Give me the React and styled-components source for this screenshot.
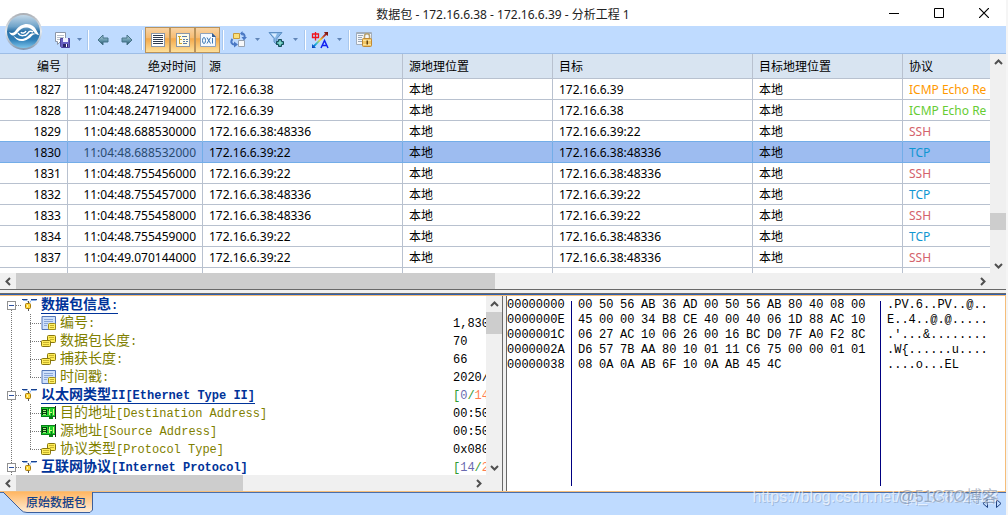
import styled, { createGlobalStyle } from "styled-components";

const GlobalStyle = createGlobalStyle`
  * {
    box-sizing: border-box;
  }
  body {
    margin: 0;
    background: #f5f5f5;
    font-family: "Noto Sans", "Noto Sans CJK SC", sans-serif;
    font-size: 12px;
    color: #000;
  }
  button {
    border: 0;
    padding: 0;
    background: none;
    font: inherit;
    color: inherit;
  }
  svg {
    display: block;
  }
`;

const Window = styled.div`
  position: relative;
  height: 100vh;
  margin-right: 2px;
  display: flex;
  flex-direction: column;
  overflow: hidden;
  background: #fff;
`;

const TitleBar = styled.header`
  height: 26px;
  flex: none;
  display: grid;
  grid-template-columns: 135px 1fr 135px;
  align-items: center;
`;
const Title = styled.h1`
  margin: 0;
  grid-column: 2;
  padding-top: 4px;
  text-align: center;
  font-size: 12px;
  font-weight: 400;
  line-height: 22px;
  white-space: nowrap;
  color: #222;
`;
const WindowButtons = styled.div`
  display: flex;
`;
const WindowButton = styled.button`
  width: 45px;
  height: 24px;
  display: flex;
  align-items: center;
  justify-content: center;
`;
const Logo = styled.div`
  position: absolute;
  top: 12px;
  left: 4px;
`;

const Toolbar = styled.div`
  height: 28px;
  flex: none;
  display: flex;
  align-items: center;
  padding-left: 50px;
  background: #bfdbff;
  border-bottom: 1px solid #9dbde6;
`;
const Tool = styled.button`
  width: ${(p) => (p.$active ? 25 : 24)}px;
  height: 26px;
  display: flex;
  align-items: center;
  justify-content: center;
  border: ${(p) => (p.$active ? "1px solid #b9935c" : "0")};
  background: ${(p) =>
    p.$active
      ? "linear-gradient(#f8d3a4, #f7bc72 40%, #f4a94b 45%, #fee09a)"
      : "none"};
`;
const Drop = styled.button`
  width: ${(p) => (p.$wide ? 14 : 11)}px;
  height: 26px;
  display: flex;
  align-items: center;
  justify-content: center;
`;
const Separator = styled.span`
  width: 2px;
  height: 20px;
  margin: 0 2px;
  background: #fff;
  border-left: 1px solid #a9c8ee;
`;

const PacketPane = styled.section`
  flex: 235 1 0;
  min-height: 0;
  display: flex;
  flex-direction: column;
`;
const PacketBody = styled.div`
  flex: 1;
  min-height: 0;
  display: flex;
`;
const TableClip = styled.div`
  flex: 1;
  min-width: 0;
  overflow: hidden;
`;
const PacketTable = styled.table`
  width: 100%;
  table-layout: fixed;
  border-collapse: separate;
  border-spacing: 0;
`;
const HeadCell = styled.th`
  height: 25px;
  padding: 2px 6px 0;
  overflow: hidden;
  text-align: ${(p) => (p.$right ? "right" : "left")};
  font-weight: 400;
  line-height: 18px;
  white-space: nowrap;
  background: #d8e4f1;
  border: solid #b8c1cf;
  border-width: 0 1px 1px 0;
  &:last-child {
    border-right: 0;
  }
`;
const Row = styled.tr`
  background: ${(p) => (p.$selected ? "#9dbcf0" : "#fff")};
  --line: ${(p) => (p.$selected ? "#73ade8" : "#b8c1cf")};
  --under: ${(p) => (p.$selected || p.$beforeSelected ? "#73ade8" : "#b8c1cf")};
`;
const Cell = styled.td`
  height: 21px;
  padding: 2px 6px 0;
  overflow: hidden;
  text-align: ${(p) => (p.$right ? "right" : "left")};
  line-height: 18px;
  white-space: nowrap;
  color: ${(p) => p.$color || "#000"};
  border: solid;
  border-width: 0 1px 1px 0;
  border-color: var(--line);
  border-bottom-color: var(--under);
  &:last-child {
    border-right: 0;
  }
`;

const VBar = styled.div`
  width: 16px;
  flex: none;
  display: flex;
  flex-direction: column;
  background: #f0f0f0;
`;
const HBar = styled.div`
  height: 16px;
  flex: none;
  display: flex;
  padding-right: 16px;
  background: #f0f0f0;
`;
const BarButton = styled.button`
  width: 16px;
  height: 16px;
  flex: none;
  display: flex;
  align-items: center;
  justify-content: center;
`;
const Track = styled.div`
  flex: 1;
  display: flex;
  flex-direction: inherit;
`;
const Thumb = styled.div`
  flex: ${(p) => p.$size} 1 0;
  background: #cdcdcd;
`;
const Gap = styled.div`
  flex: ${(p) => p.$size} 1 0;
`;

const Splitter = styled.div`
  height: 7px;
  flex: none;
  background: #f0f0f0;
  border-top: 1px solid #696969;
  border-bottom: 1px solid #f5bd79;
  box-shadow: inset 0 -1px #2f5fae, inset 0 -2px #696969;
`;

const DetailPane = styled.section`
  flex: 195 1 0;
  min-height: 0;
  display: flex;
`;
const TreePane = styled.div`
  flex: 0 0 calc(50% - 1px);
  min-width: 0;
  display: flex;
  flex-direction: column;
`;
const TreeBody = styled.div`
  flex: 1;
  min-height: 0;
  display: flex;
`;
const TreeSplitter = styled.div`
  width: 5px;
  flex: none;
  background: #f0f0f0;
  border: solid #696969;
  border-width: 0 1px;
`;

const dotsDown = "repeating-linear-gradient(#777 0 1px, transparent 1px 2px)";
const dotsAcross =
  "repeating-linear-gradient(90deg, #777 0 1px, transparent 1px 2px)";

const Tree = styled.ul`
  flex: 1;
  min-width: 0;
  margin: 0;
  padding: 0;
  overflow: hidden;
  list-style: none;
  font-family: "Liberation Mono", "Noto Sans CJK SC", monospace;
  background: ${dotsDown} 11px 10px / 1px 100% no-repeat;
`;
const Branch = styled.ul`
  margin: 0 0 0 30px;
  padding: 0;
  list-style: none;
  background: ${dotsDown} 0 0 / 1px calc(100% - 8px) no-repeat;
`;
const Node = styled.div`
  height: 18px;
  display: grid;
  grid-template-columns: 1fr 33px;
  padding-left: ${(p) => (p.$root ? 7 : 0)}px;
`;
const NodeName = styled.div`
  display: flex;
  align-items: center;
  color: ${(p) => (p.$root ? "#003399" : "#808000")};
  white-space: nowrap;
`;
const NodeValue = styled.div`
  overflow: hidden;
  padding-top: 2px;
  line-height: 16px;
  white-space: nowrap;
  color: ${(p) => p.$color || "#000"};
`;
const Toggle = styled.button`
  width: 9px;
  height: 9px;
  display: flex;
  align-items: center;
  justify-content: center;
  background: #fff;
  border: 1px solid #919191;
`;
const Dots = styled.span`
  width: ${(p) => p.$width}px;
  height: 1px;
  background: ${dotsAcross};
`;
const Label = styled.span`
  margin-left: ${(p) => (p.$root ? 4 : 3)}px;
  height: 17px;
  line-height: 17px;
  font-weight: ${(p) => (p.$root ? 700 : 400)};
  border-bottom: ${(p) => (p.$root ? "1px solid #003399" : "0")};
`;
const Han = styled.span`
  font-size: 14px;
`;
const Tint = styled.span`
  color: ${(p) => p.$color};
`;

const HexPane = styled.div`
  flex: 1;
  min-width: 0;
  display: flex;
  overflow: hidden;
  border-right: 1px solid #f5bd79;
  font-family: "Liberation Mono", monospace;
  line-height: 15px;
`;
const Offsets = styled.div`
  width: 64px;
  flex: none;
  padding-top: 2px;
`;
const Divider = styled.span`
  width: 1px;
  flex: none;
  margin: 5px 0;
  background: #000080;
`;
const Bytes = styled.div`
  flex: none;
  display: grid;
  grid-template-columns: repeat(14, 21px);
  grid-auto-rows: 15px;
  padding: 2px 8px 0 6px;
`;
const Ascii = styled.div`
  padding: 2px 0 0 6px;
  white-space: pre;
`;

const TabStrip = styled.nav`
  position: relative;
  height: 24px;
  flex: none;
  display: flex;
  justify-content: space-between;
  background: #bfdbff;
  border-top: 1px solid #f5bd79;
  box-shadow: inset 0 1px #4a6ea9;
`;
const Tab = styled.button`
  position: relative;
  width: 94px;
  height: 22px;
  padding-left: 18px;
  color: #15428b;
  font-weight: 500;
  line-height: 20px;
`;
const TabShape = styled.svg`
  position: absolute;
  top: 0;
  left: 0;
`;
const TabText = styled.span`
  position: relative;
`;
const TabArrows = styled.div`
  display: flex;
  gap: 8px;
  padding: 0 4px;
`;
const Watermark = styled.div`
  position: absolute;
  right: ${(p) => p.$right}px;
  bottom: 8px;
  font-family: "Liberation Sans", "Noto Sans CJK SC", sans-serif;
  font-size: 16px;
  line-height: 20px;
  white-space: nowrap;
  color: ${(p) => p.$color};
  text-shadow: ${(p) => p.$shadow};
  pointer-events: none;
`;

const ORANGE = "#ff9900";
const GREEN = "#66cc33";
const RED = "#d4636b";
const BLUE = "#0f96d2";

const A = "172.16.6.38";
const B = "172.16.6.39";
const packets = [
  ["1827", "11:04:48.247192000", A, B, "ICMP Echo Re", ORANGE],
  ["1828", "11:04:48.247194000", B, A, "ICMP Echo Re", GREEN],
  ["1829", "11:04:48.688530000", A + ":48336", B + ":22", "SSH", RED],
  ["1830", "11:04:48.688532000", B + ":22", A + ":48336", "TCP", BLUE],
  ["1831", "11:04:48.755456000", B + ":22", A + ":48336", "SSH", RED],
  ["1832", "11:04:48.755457000", A + ":48336", B + ":22", "TCP", BLUE],
  ["1833", "11:04:48.755458000", A + ":48336", B + ":22", "SSH", RED],
  ["1834", "11:04:48.755459000", B + ":22", A + ":48336", "TCP", BLUE],
  ["1837", "11:04:49.070144000", B + ":22", A + ":48336", "SSH", RED],
];
const SELECTED = 3;

const tree = [
  {
    han: "数据包信息",
    latin: ":",
    children: [
      { icon: "note", han: "编号", latin: ":", value: "1,830" },
      { icon: "size", han: "数据包长度", latin: ":", value: "70" },
      { icon: "size", han: "捕获长度", latin: ":", value: "66" },
      { icon: "note", han: "时间戳", latin: ":", value: "2020/" },
    ],
  },
  {
    han: "以太网类型",
    latin: "II[Ethernet Type II]",
    range: ["0", "14"],
    children: [
      { icon: "card", han: "目的地址", latin: "[Destination Address]", value: "00:50" },
      { icon: "card", han: "源地址", latin: "[Source Address]", value: "00:50" },
      { icon: "size", han: "协议类型", latin: "[Protocol Type]", value: "0x080" },
    ],
  },
  {
    han: "互联网协议",
    latin: "[Internet Protocol]",
    range: ["14", "20"],
    children: [],
  },
];

const hexRows = [
  ["00000000", "00 50 56 AB 36 AD 00 50 56 AB 80 40 08 00", ".PV.6..PV..@.."],
  ["0000000E", "45 00 00 34 B8 CE 40 00 40 06 1D 88 AC 10", "E..4..@.@....."],
  ["0000001C", "06 27 AC 10 06 26 00 16 BC D0 7F A0 F2 8C", ".'...&........"],
  ["0000002A", "D6 57 7B AA 80 10 01 11 C6 75 00 00 01 01", ".W{......u...."],
  ["00000038", "08 0A 0A AB 6F 10 0A AB 45 4C", "....o...EL"],
];

const LogoIcon = () => (
  <svg width="40" height="40" viewBox="0 0 40 40">
    <defs>
      <linearGradient id="ball" x2="0" y2="1">
        <stop offset="0" stopColor="#c3d8e8" />
        <stop offset="0.35" stopColor="#6fa3c9" />
        <stop offset="0.5" stopColor="#2b72a8" />
        <stop offset="0.75" stopColor="#2f7fb8" />
        <stop offset="1" stopColor="#7cc4ea" />
      </linearGradient>
      <linearGradient id="rim" x2="0" y2="1">
        <stop offset="0" stopColor="#a9adb3" />
        <stop offset="0.5" stopColor="#e6ebf0" />
        <stop offset="1" stopColor="#8095ad" />
      </linearGradient>
    </defs>
    <circle cx="19.500" cy="19.500" r="18.500" fill="url(#rim)" />
    <circle cx="19.500" cy="19.500" r="16.500" fill="url(#ball)" />
    <path
      d="M5 20C8 22 10 21 12 18C16 12 24 10 29 14C32 16 33 20 35 23C31 23 30 19 27 17C22 14 17 16 14 20C11 24 7 25 5 20Z"
      fill="#fff"
    />
    <path
      d="M9 23C13 28 19 28 23 25C26 22 28 20 32 22C28 22 28 25 24 27C18 31 12 29 9 23Z"
      fill="#fff"
    />
    <path
      d="M14 21C16 25 22 24 24 21C25 19 27 19 29 20M17 20C18 22 21 21 22 19"
      fill="none"
      stroke="#fff"
      strokeWidth="1.500"
    />
  </svg>
);

const SaveIcon = () => (
  <svg width="17" height="17" viewBox="0 0 17 17">
    <path d="M1.500 1.500H11.500V10.500H6.500L3.500 13.500V10.500H1.500Z" fill="#fff" stroke="#8b96a8" />
    <path d="M3 4.500H10M3 6.500H10M3 8.500H7" stroke="#b7c0cc" />
    <path d="M6.500 7.500H15.500V16.500H7.500L6.500 15.500Z" fill="#6861c2" stroke="#4a439c" />
    <path d="M9 7H14V11H9Z" fill="#f1f1ff" />
    <path d="M9 13H14V16H9Z" fill="#2b2668" />
    <path d="M12 13H13V16H12Z" fill="#fff" />
  </svg>
);

const MoveIcon = ({ right }) => (
  <svg width="12" height="12" viewBox="0 0 12 12">
    <defs>
      <linearGradient id={right ? "mr" : "ml"} x2="0" y2="1">
        <stop offset="0" stopColor="#b9d5e0" />
        <stop offset="0.6" stopColor="#5b8fa5" />
        <stop offset="1" stopColor="#173e50" />
      </linearGradient>
    </defs>
    <path
      d={right ? "M11 6L6 1V4H1V8H6V11Z" : "M1 6L6 1V4H11V8H6V11Z"}
      fill={right ? "url(#mr)" : "url(#ml)"}
      stroke="#47748a"
      strokeWidth="1"
    />
  </svg>
);

const ListIcon = () => (
  <svg width="16" height="16" viewBox="0 0 16 16" shapeRendering="crispEdges">
    <path d="M1 1H15V15H1Z" fill="#8a97aa" />
    <path d="M2 2H14V14H2Z" fill="#fff" />
    <path d="M3 3.500H13M3 5.500H13M3 7.500H13M3 9.500H13M3 11.500H13" stroke="#2f3b50" />
  </svg>
);

const DetailIcon = () => (
  <svg width="16" height="16" viewBox="0 0 16 16" shapeRendering="crispEdges">
    <path d="M1 1H15V15H1Z" fill="#8a97aa" />
    <path d="M2 2H14V14H2Z" fill="#fffbe6" />
    <path d="M3 4.500H6M4.500 5V12M5 7.500H7M5 11.500H7" stroke="#d0a52a" />
    <path d="M7 4.500H12M8 7.500H10M11 7.500H13M8 9.500H10M11 9.500H13M8 11.500H12" stroke="#5a7bab" />
  </svg>
);

const HexIcon = () => (
  <svg width="16" height="16" viewBox="0 0 16 16">
    <path d="M0.500 1.500H12.500L15.500 4.500V14.500H0.500Z" fill="#f4f9ff" stroke="#8fa3bd" />
    <path d="M12 1V5H16Z" fill="#355d91" />
    <ellipse cx="4" cy="8.500" rx="1.500" ry="3" fill="none" stroke="#3b78b5" />
    <path d="M7 5.500L10.500 11.500M10.500 5.500L7 11.500M12.500 6V11.500" stroke="#3b78b5" />
  </svg>
);

const SwapIcon = () => (
  <svg width="17" height="17" viewBox="0 0 17 17">
    <path d="M3.500 2.500H9.500V7.500H3.500Z" fill="#fbe07a" stroke="#c79a3c" />
    <path d="M8.500 9.500H14.500V15.500H8.500Z" fill="#f7f8fa" stroke="#97a2b0" />
    <path d="M2.500 8C0 11 2 14 5 13.500" fill="none" stroke="#4a78c4" strokeWidth="2" />
    <path d="M4 10.500L8 13.500L4 16.500Z" fill="#4a78c4" />
    <path d="M11.500 2.500C14 2.500 15 4 14.500 6.500" fill="none" stroke="#4a78c4" strokeWidth="2" />
    <path d="M11.500 6H17L14 9.500Z" fill="#4a78c4" />
    <path d="M12.500 0V5L10 2.500Z" fill="#4a78c4" />
  </svg>
);

const FilterIcon = () => (
  <svg width="17" height="17" viewBox="0 0 17 17">
    <path d="M1 1.500H14L9 7.500V14L6 11V7.500Z" fill="#85b5e5" stroke="#5d8fc4" />
    <path d="M3 2.500H9L7 7Z" fill="#d8ecff" />
    <path d="M10.500 8.500H13.500V10.500H15.500V13.500H13.500V15.500H10.500V13.500H8.500V10.500H10.500Z" fill="#3fa39f" stroke="#164c58" />
    <path d="M12 10V14M10 12H14" stroke="#a4e8dc" />
  </svg>
);

const TranslateIcon = () => (
  <svg width="18" height="18" viewBox="0 0 18 18">
    <defs>
      <linearGradient id="ray" x1="0" y1="1" x2="1" y2="0">
        <stop offset="0" stopColor="#0a2ab8" />
        <stop offset="0.25" stopColor="#18b4e0" />
        <stop offset="0.5" stopColor="#f2dc30" />
        <stop offset="0.75" stopColor="#c0392b" />
        <stop offset="1" stopColor="#5c0c0c" />
      </linearGradient>
    </defs>
    <path
      d="M1 17V13L2.500 14.200L14 2.700L13 1H17V5L15.300 4L3.800 15.500L5 17Z"
      fill="url(#ray)"
    />
    <path d="M1.500 3V6.500H7.500V3ZM4.500 1V9.500" fill="none" stroke="#f0141e" strokeWidth="1.300" />
    <path d="M10 17L13.500 9.500L17 17M11.500 14.500H15.500" fill="none" stroke="#1020f0" strokeWidth="1.500" />
  </svg>
);

const LockIcon = () => (
  <svg width="17" height="17" viewBox="0 0 17 17">
    <path d="M0.500 1.500H15.500V13.500H0.500Z" fill="#f5f7fa" stroke="#a3aebb" />
    <path d="M1 2.500H15" stroke="#9fb0c2" />
    <path d="M2 4.500H7M2 6.500H6M2 8.500H6M2 10.500H6" stroke="#9aa7b6" />
    <path d="M8.500 8V5C8.500 2 13.500 2 13.500 5V8" fill="none" stroke="#b5a070" strokeWidth="1.500" />
    <rect x="6.500" y="7.500" width="9" height="8" rx="1" fill="#f2c868" stroke="#c08a35" />
    <path d="M7 9.500H15M7 13.500H15" stroke="#fae3a0" />
    <path d="M10.500 9.500H12V13.500H10.500Z" fill="#62430f" />
  </svg>
);

const DropIcon = () => (
  <svg width="5" height="3" viewBox="0 0 5 3">
    <path d="M0 0H5L2.500 3Z" fill="#6085b8" />
  </svg>
);

const turns = { up: 0, right: 90, down: 180, left: 270 };
const Chevron = ({ to }) => (
  <svg width="9" height="9" viewBox="0 0 9 9">
    <path
      d="M1 6L4.500 2.500L8 6"
      fill="none"
      stroke="#505050"
      strokeWidth="2"
      transform={`rotate(${turns[to]} 4.5 4.5)`}
    />
  </svg>
);

const RootIcon = () => (
  <svg width="15" height="14" viewBox="0 0 15 14">
    <path d="M0 1.500H5.500M9 1.500H15" stroke="#17418f" />
    <path d="M1 2.500H5L6.500 4.500M14.500 2.500H9L7.500 5" fill="none" stroke="#8fb2e6" />
    <path d="M6.500 3V6" stroke="#555" />
    <rect x="3.500" y="5.500" width="5" height="5" rx="1" fill="#ffd83d" stroke="#a77a0a" />
    <path d="M5 7H6V9H5Z" fill="#fff6b8" />
    <path d="M6.500 11V13" stroke="#555" />
  </svg>
);

const nodeIcons = {
  note: (
    <svg width="16" height="16" viewBox="0 0 16 16">
      <path d="M1 1.500H14.500V14.500H1Z" fill="#cfe0fb" stroke="#5275b8" />
      <path d="M3 4.500H12M3 6.500H12M3 8.500H7M3 10.500H6" stroke="#8aa6d8" />
      <rect x="7.500" y="8.500" width="7" height="6" rx="1" fill="#fff16a" stroke="#a08c13" />
      <path d="M9 10.500H13M9 12.500H13" stroke="#c4ad25" />
    </svg>
  ),
  size: (
    <svg width="16" height="16" viewBox="0 0 16 16">
      <rect x="6.500" y="2.500" width="8" height="7" rx="1" fill="#ffec58" stroke="#88770f" />
      <rect x="0.500" y="7.500" width="9" height="6" rx="1" fill="#ffec58" stroke="#88770f" />
      <path d="M8 4.500H13M9 6.500H13M2 9.500H8M2 11.500H8" stroke="#c9b32c" />
    </svg>
  ),
  card: (
    <svg width="16" height="16" viewBox="0 0 16 16" shapeRendering="crispEdges">
      <path d="M0 2H14V12H12V14H8V12H0Z" fill="#087f16" />
      <path d="M1 3H14V11H1Z" fill="#1fd02f" />
      <path d="M1 4H6V10H1Z" fill="#063e0d" />
      <path d="M2 5.500H5M2 7.500H5M2 9.500H5" stroke="#9df07a" />
      <path d="M8 4V10M12 4V10M9 7.500H11" stroke="#d9ff82" />
      <path d="M7 3V6M10 8V11" stroke="#087f16" />
      <path d="M14.500 1V14" stroke="#222" />
    </svg>
  ),
};

const VScroll = ({ before, size, after }) => (
  <VBar>
    <BarButton aria-label="Scroll up">
      <Chevron to="up" />
    </BarButton>
    <Track>
      <Gap $size={before} />
      <Thumb $size={size} />
      <Gap $size={after} />
    </Track>
    <BarButton aria-label="Scroll down">
      <Chevron to="down" />
    </BarButton>
  </VBar>
);

const HScroll = () => (
  <HBar>
    <BarButton aria-label="Scroll left">
      <Chevron to="left" />
    </BarButton>
    <Track>
      <Thumb $size={1} />
      <Gap $size={1} />
    </Track>
    <BarButton aria-label="Scroll right">
      <Chevron to="right" />
    </BarButton>
  </HBar>
);

const TreeNode = ({ node }) => (
  <li>
    <Node $root>
      <NodeName $root>
        <Toggle aria-label="Collapse">
          <svg width="5" height="1">
            <path d="M0 0.500H5" stroke="#2b50a0" />
          </svg>
        </Toggle>
        <Dots $width={6} />
        <RootIcon />
        <Label $root>
          <Han>{node.han}</Han>
          {node.latin}
        </Label>
      </NodeName>
      {node.range && (
        <NodeValue $color="#2f9a2f">
          [<Tint $color="#6a6ab0">{node.range[0]}</Tint>/
          <Tint $color="#ff7f50">{node.range[1]}</Tint>
        </NodeValue>
      )}
    </Node>
    <Branch>
      {node.children.map((child) => (
        <li key={child.han}>
          <Node>
            <NodeName>
              <Dots $width={11} />
              {nodeIcons[child.icon]}
              <Label>
                <Han>{child.han}</Han>
                {child.latin}
              </Label>
            </NodeName>
            <NodeValue>{child.value}</NodeValue>
          </Node>
        </li>
      ))}
    </Branch>
  </li>
);

const App = () => {
  return (
    <Window>
      <GlobalStyle />
      <TitleBar>
        <Title>数据包 - 172.16.6.38 - 172.16.6.39 - 分析工程 1</Title>
        <WindowButtons>
          <WindowButton aria-label="Minimize">
            <svg width="10" height="10">
              <path d="M0 5.500H10" stroke="#000" />
            </svg>
          </WindowButton>
          <WindowButton aria-label="Maximize">
            <svg width="10" height="10">
              <path d="M0.500 0.500H9.500V9.500H0.500Z" fill="none" stroke="#000" />
            </svg>
          </WindowButton>
          <WindowButton aria-label="Close">
            <svg width="10" height="10">
              <path d="M0 0L10 10M10 0L0 10" stroke="#000" strokeWidth="1.200" />
            </svg>
          </WindowButton>
        </WindowButtons>
      </TitleBar>

      <Toolbar>
        <Tool aria-label="Save">
          <SaveIcon />
        </Tool>
        <Drop aria-label="Save options">
          <DropIcon />
        </Drop>
        <Separator />
        <Tool aria-label="Previous">
          <MoveIcon />
        </Tool>
        <Tool aria-label="Next">
          <MoveIcon right />
        </Tool>
        <Separator />
        <Tool $active aria-label="Packet list">
          <ListIcon />
        </Tool>
        <Tool $active aria-label="Decode">
          <DetailIcon />
        </Tool>
        <Tool $active aria-label="Hex">
          <HexIcon />
        </Tool>
        <Separator />
        <Tool aria-label="Layout">
          <SwapIcon />
        </Tool>
        <Drop $wide aria-label="Layout options">
          <DropIcon />
        </Drop>
        <Tool aria-label="Filter">
          <FilterIcon />
        </Tool>
        <Drop $wide aria-label="Filter options">
          <DropIcon />
        </Drop>
        <Separator />
        <Tool aria-label="Encoding">
          <TranslateIcon />
        </Tool>
        <Drop $wide aria-label="Encoding options">
          <DropIcon />
        </Drop>
        <Separator />
        <Tool aria-label="Lock">
          <LockIcon />
        </Tool>
      </Toolbar>

      <PacketPane>
        <PacketBody>
          <TableClip>
            <PacketTable>
              <colgroup>
                <col width="68" />
                <col width="135" />
                <col width="200" />
                <col width="150" />
                <col width="200" />
                <col width="150" />
                <col />
              </colgroup>
              <thead>
                <tr>
                  <HeadCell $right>编号</HeadCell>
                  <HeadCell $right>绝对时间</HeadCell>
                  <HeadCell>源</HeadCell>
                  <HeadCell>源地理位置</HeadCell>
                  <HeadCell>目标</HeadCell>
                  <HeadCell>目标地理位置</HeadCell>
                  <HeadCell>协议</HeadCell>
                </tr>
              </thead>
              <tbody>
                {packets.map(([id, time, from, to, protocol, color], i) => (
                  <Row
                    key={id}
                    $selected={i === SELECTED}
                    $beforeSelected={i + 1 === SELECTED}
                  >
                    <Cell $right>{id}</Cell>
                    <Cell $right $color={i === SELECTED && "#294b70"}>
                      {time}
                    </Cell>
                    <Cell>{from}</Cell>
                    <Cell>本地</Cell>
                    <Cell>{to}</Cell>
                    <Cell>本地</Cell>
                    <Cell $color={color}>{protocol}</Cell>
                  </Row>
                ))}
                <Row>
                  <Cell />
                  <Cell />
                  <Cell />
                  <Cell />
                  <Cell />
                  <Cell />
                  <Cell />
                </Row>
              </tbody>
            </PacketTable>
          </TableClip>
          <VScroll before={143} size={17} after={27} />
        </PacketBody>
        <HScroll />
      </PacketPane>

      <Splitter />

      <DetailPane>
        <TreePane>
          <TreeBody>
            <Tree>
              {tree.map((node) => (
                <TreeNode key={node.han} node={node} />
              ))}
            </Tree>
            <VScroll before={0} size={22} after={123} />
          </TreeBody>
          <HScroll />
        </TreePane>
        <TreeSplitter />
        <HexPane>
          <Offsets>
            {hexRows.map(([offset]) => (
              <div key={offset}>{offset}</div>
            ))}
          </Offsets>
          <Divider />
          <Bytes>
            {hexRows.map(([offset, bytes]) =>
              bytes
                .split(" ")
                .map((byte, i) => <span key={offset + i}>{byte}</span>)
            )}
          </Bytes>
          <Divider />
          <Ascii>
            {hexRows.map(([offset, , text]) => (
              <div key={offset}>{text}</div>
            ))}
          </Ascii>
        </HexPane>
      </DetailPane>

      <TabStrip>
        <Tab>
          <TabShape width="94" height="22" viewBox="0 0 94 22">
            <defs>
              <linearGradient id="tab" x2="0" y2="1">
                <stop offset="0" stopColor="#ffb662" />
                <stop offset="1" stopColor="#ffeeda" />
              </linearGradient>
            </defs>
            <path d="M3 0L21 18Q23 20.500 27 20.500H90L92.500 18V0Z" fill="url(#tab)" />
            <path
              d="M3 0L21 18Q23 20.500 27 20.500H90L92.500 18V0"
              fill="none"
              stroke="#3c5f9c"
            />
          </TabShape>
          <TabText>原始数据包</TabText>
        </Tab>
        <TabArrows>
          <button aria-label="Previous tab">
            <svg width="6" height="9">
              <path d="M5.500 0.500V8.500L1 4.500Z" fill="none" stroke="#1e4080" />
            </svg>
          </button>
          <button aria-label="Next tab">
            <svg width="6" height="9">
              <path d="M0.500 0.500V8.500L5 4.500Z" fill="none" stroke="#1e4080" />
            </svg>
          </button>
        </TabArrows>
        <Watermark $right={8} $color="rgba(255,255,255,0.65)" $shadow="1px 1px rgba(90,110,140,0.3)">
          https://blog.csdn.net/qq_33822728
        </Watermark>
        <Watermark $right={8} $color="rgba(110,125,150,0.55)" $shadow="1px 1px rgba(255,255,255,0.4)">
          @51CTO博客
        </Watermark>
      </TabStrip>

      <Logo>
        <LogoIcon />
      </Logo>
    </Window>
  );
};

export default App;
